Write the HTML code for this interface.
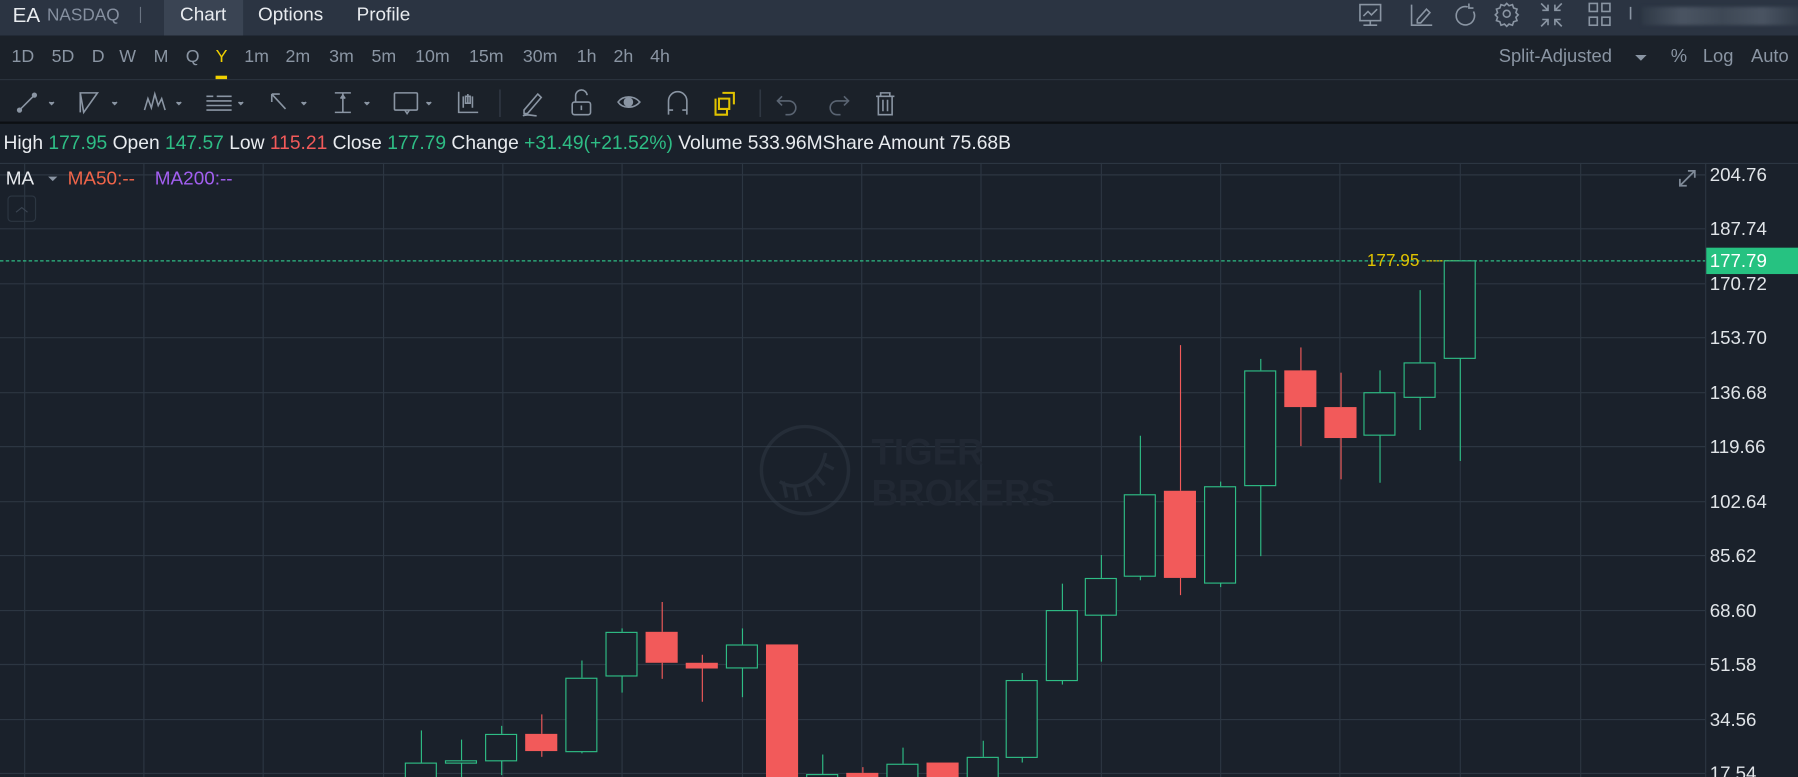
<!DOCTYPE html>
<html><head><meta charset="utf-8"><style>
html,body{margin:0;padding:0;width:1798px;height:777px;overflow:hidden;background:#1a212b;}
#w{position:absolute;left:0;top:0;width:1568px;height:678px;transform:scale(1.14668);transform-origin:0 0;font-family:"Liberation Sans",sans-serif;overflow:hidden;background:#1a212b}
.a{position:absolute;white-space:nowrap}
.hdr{position:absolute;left:0;top:0;width:1568px;height:31px;background:#2b3442}
.r2{position:absolute;left:0;top:31px;width:1568px;height:38px;background:#1b2129;border-bottom:1px solid #2d3540}
.tb{position:absolute;left:0;top:70px;width:1568px;height:36px;background:#1b2129;border-bottom:2px solid #0c0f13}
.tf span{position:absolute;top:41px;font-size:15.5px;color:#8a95a3}
.g{color:#2ebd85}.r{color:#f25a5a}
</style></head><body><div id="w">
<div class="hdr"></div>
<div class="a" style="left:143px;top:0;width:69px;height:31px;background:#3a4453"></div>
<div class="a" style="left:11px;top:3px;font-size:18px;color:#e8ebef">EA</div>
<div class="a" style="left:41px;top:5px;font-size:15px;color:#8690a0">NASDAQ</div>
<div class="a" style="left:122px;top:6px;width:1px;height:14px;background:#6a7482"></div>
<div class="a" style="left:157px;top:4px;font-size:16.5px;color:#e8ebef">Chart</div>
<div class="a" style="left:225px;top:4px;font-size:16.5px;color:#e8ebef">Options</div>
<div class="a" style="left:311px;top:4px;font-size:16.5px;color:#e8ebef">Profile</div>
<svg class="a" style="left:1180px;top:0" width="250" height="28" fill="none" stroke="#8a95a3" stroke-width="1.4">
<rect x="6" y="4" width="18" height="14"/><path d="M9 14l4-4 3 3 5-5M15 18v4M9 22h12"/>
<path d="M51 4v18h18M56 17l8-9 3 3-8 9h-3z"/>
<path d="M100 6a8 8 0 1 0 5 4M101 3v4h4"/>
<circle cx="134" cy="12" r="3"/><path d="M134 3l2 2 3-1 1 3 3 1-1 3 2 2-2 2 1 3-3 1-1 3-3-1-2 2-2-2-3 1-1-3-3-1 1-3-2-2 2-2-1-3 3-1 1-3 3 1z"/>
<path d="M164 3l6 6M170 4v5h-5M182 3l-6 6M176 4v5h5M164 23l6-6M170 22v-5h-5M182 23l-6-6M176 22v-5h5"/>
<rect x="206" y="3" width="7" height="7"/><rect x="217" y="3" width="7" height="7"/><rect x="206" y="15" width="7" height="7"/><rect x="217" y="15" width="7" height="7"/>
<path d="M242 6v11"/></svg>
<div class="a" style="left:1432px;top:6px;width:140px;height:16px;background:linear-gradient(90deg,#2f3946,#4a5462,#3e4855,#4a5462,#2f3946);filter:blur(1.5px)"></div>
<div class="r2"></div>
<div class="tf"><span style="left:10px">1D</span><span style="left:45px">5D</span><span style="left:80px">D</span><span style="left:104px">W</span><span style="left:134px">M</span><span style="left:162px">Q</span><span style="left:188px;color:#f0d000">Y</span><span style="left:213px">1m</span><span style="left:249px">2m</span><span style="left:287px">3m</span><span style="left:324px">5m</span><span style="left:362px">10m</span><span style="left:409px">15m</span><span style="left:456px">30m</span><span style="left:503px">1h</span><span style="left:535px">2h</span><span style="left:567px">4h</span></div>
<div class="a" style="left:188px;top:66px;width:10px;height:3px;background:#f0d000"></div>
<div class="a" style="left:1307px;top:41px;font-size:16px;color:#8a95a3">Split-Adjusted</div>
<div class="a" style="left:1426px;top:48px;width:0;height:0;border-left:5px solid transparent;border-right:5px solid transparent;border-top:5px solid #8a95a3"></div>
<div class="a" style="left:1457px;top:41px;font-size:16px;color:#8a95a3">%</div>
<div class="a" style="left:1485px;top:41px;font-size:16px;color:#8a95a3">Log</div>
<div class="a" style="left:1527px;top:41px;font-size:16px;color:#8a95a3">Auto</div>
<div class="tb"></div>
<svg class="a" style="left:0;top:72px" width="800" height="34" fill="none" stroke="#8a95a3" stroke-width="1.4">
<path d="M17 24l13-13"/><circle cx="17" cy="24" r="1.6" fill="#8a95a3"/><circle cx="30" cy="11" r="1.6" fill="#8a95a3"/><path d="M43 17l2 2 2-2" fill="#8a95a3"/>
<path d="M70 9h15l-12 17zM70 9v17"/><path d="M98 17l2 2 2-2" fill="#8a95a3"/>
<path d="M126 24l3-10 3 8 3-12 3 10 3-6 3 10"/><path d="M154 17l2 2 2-2" fill="#8a95a3"/>
<path d="M180 12h6M180 16h22M180 20h22M180 24h22M189 12h13"/><path d="M208 17l2 2 2-2" fill="#8a95a3"/>
<path d="M237 10l12 13M237 10v7M237 10h7"/><path d="M263 17l2 2 2-2" fill="#8a95a3"/>
<path d="M292 9h14M292 26h14M299 9v17"/><path d="M297 14l2-3 2 3" fill="#8a95a3"/><path d="M318 17l2 2 2-2" fill="#8a95a3"/>
<rect x="344" y="9" width="20" height="15" rx="1"/><path d="M353 24l2 3 2-3"/><path d="M372 17l2 2 2-2" fill="#8a95a3"/>
<path d="M400 8v18h17M404 12v10M408 10v8M412 12v10"/><rect x="406" y="12" width="4" height="6"/>
<path d="M436 6v24" stroke="#2f3742"/>
<path d="M457 24l12-14 3 3-12 14h-3zM456 29c4-2 8 0 12 0"/>
<rect x="499" y="17" width="16" height="11" rx="2"/><path d="M502 17v-5a5 5 0 0 1 10-1M507 20v4"/>
<path d="M539 17c4-6 14-6 19 0c-5 6-15 6-19 0z"/><circle cx="548" cy="17" r="3.5" fill="#8a95a3"/>
<path d="M583 28v-12a8 8 0 0 1 16 0v12M583 24h4M595 24h4"/>
<path d="M627 14h9v9h-9zM630 9h10v10M624 14v14h10v-5" stroke="#e0c200" stroke-width="1.8"/>
<path d="M663 6v24" stroke="#2f3742"/>
<path d="M682 12l-4 4 4 4M678 16h10a6 6 0 0 1 0 12h-3" stroke="#5a6472"/>
<path d="M736 12l4 4-4 4M740 16h-10a6 6 0 0 0 0 12h3" stroke="#5a6472"/>
<path d="M764 12h16M768 12v-3h8v3M766 12v16h12v-16M770 15v10M774 15v10"/>
</svg>
<div class="a" style="left:3px;top:115px;font-size:16.8px;color:#e8ebef">High <span class="g">177.95</span> Open <span class="g">147.57</span> Low <span class="r">115.21</span> Close <span class="g">177.79</span> Change <span class="g">+31.49(+21.52%)</span> Volume 533.96MShare Amount 75.68B</div>
<svg class="a" style="left:0;top:0" width="1568" height="678">
<g stroke="#2c3642" stroke-width="1">
<line x1="0" y1="142.5" x2="1568" y2="142.5"/>
<line x1="1487.5" y1="142" x2="1487.5" y2="678"/>
</g>
<g stroke="#2c3642">
<line x1="0" x2="1487" y1="152.5" y2="152.5"/><line x1="0" x2="1487" y1="199.5" y2="199.5"/><line x1="0" x2="1487" y1="247.5" y2="247.5"/><line x1="0" x2="1487" y1="294.5" y2="294.5"/><line x1="0" x2="1487" y1="342.5" y2="342.5"/><line x1="0" x2="1487" y1="389.5" y2="389.5"/><line x1="0" x2="1487" y1="437.5" y2="437.5"/><line x1="0" x2="1487" y1="484.5" y2="484.5"/><line x1="0" x2="1487" y1="532.5" y2="532.5"/><line x1="0" x2="1487" y1="579.5" y2="579.5"/><line x1="0" x2="1487" y1="627.5" y2="627.5"/><line x1="0" x2="1487" y1="674.5" y2="674.5"/>
<line y1="142" y2="678" x1="21.5" x2="21.5"/><line y1="142" y2="678" x1="125.5" x2="125.5"/><line y1="142" y2="678" x1="229.5" x2="229.5"/><line y1="142" y2="678" x1="334.5" x2="334.5"/><line y1="142" y2="678" x1="438.5" x2="438.5"/><line y1="142" y2="678" x1="542.5" x2="542.5"/><line y1="142" y2="678" x1="647.5" x2="647.5"/><line y1="142" y2="678" x1="751.5" x2="751.5"/><line y1="142" y2="678" x1="855.5" x2="855.5"/><line y1="142" y2="678" x1="960.5" x2="960.5"/><line y1="142" y2="678" x1="1064.5" x2="1064.5"/><line y1="142" y2="678" x1="1168.5" x2="1168.5"/><line y1="142" y2="678" x1="1273.5" x2="1273.5"/><line y1="142" y2="678" x1="1378.5" x2="1378.5"/>
</g>
<g opacity="0.4" fill="none" stroke="#36404c" stroke-width="3">
<circle cx="702" cy="410" r="38"/><path d="M680 420c15 10 35 0 40-25M683 420l3 14M693 424l2 12M703 422l4 11M712 415l7 8M719 405l8 4"/>
</g>
<text x="760" y="405" font-family="Liberation Sans" font-weight="bold" font-size="32" fill="#212833">TIGER</text>
<text x="760" y="441" font-family="Liberation Sans" font-weight="bold" font-size="32" fill="#212833">BROKERS</text>
<line x1="0" x2="1487" y1="227.5" y2="227.5" stroke="#2ebd85" stroke-dasharray="3,2"/>
<text x="1192" y="232" font-family="Liberation Sans" font-size="15" fill="#e0c200">177.95</text>
<line x1="1244" x2="1272" y1="227.5" y2="227.5" stroke="#e0c200" stroke-dasharray="2,1"/>
<g font-family="Liberation Sans" font-size="16.3" fill="#e0e4e8">
<text x="1491" y="158">204.76</text><text x="1491" y="205">187.74</text><text x="1491" y="253">170.72</text><text x="1491" y="300">153.70</text><text x="1491" y="348">136.68</text><text x="1491" y="395">119.66</text><text x="1491" y="443">102.64</text><text x="1491" y="490">85.62</text><text x="1491" y="538">68.60</text><text x="1491" y="585">51.58</text><text x="1491" y="633">34.56</text><text x="1491" y="680">17.54</text>
</g>
<rect x="1488" y="216" width="80" height="23" fill="#26c281"/>
<text x="1491" y="233" font-family="Liberation Sans" font-size="16.3" fill="#ffffff">177.79</text>
<path d="M1465 162l13-13M1472 149h6v6M1465 156v6h6" stroke="#7f8a98" stroke-width="1.5" fill="none"/>
<rect x="7" y="171" width="24" height="22" rx="3" fill="none" stroke="#2c3642"/><path d="M14 185l5-4 5 4" stroke="#3b4552" fill="none"/>
</svg>
<div class="a" style="left:5px;top:147px;font-size:16.5px;color:#e8ebef">MA</div>
<div class="a" style="left:42px;top:154px;width:0;height:0;border-left:4px solid transparent;border-right:4px solid transparent;border-top:4px solid #8a95a3"></div>
<div class="a" style="left:59px;top:147px;font-size:16.5px;color:#f0654a">MA50:--</div>
<div class="a" style="left:135px;top:147px;font-size:16.5px;color:#a25ff0">MA200:--</div>
<svg class="a" style="left:0;top:0" width="1568" height="678" id="cs"></svg>
<script>
var d=[[353,'g',665,700,637,700],[388,'g',663,665,645,690],[423,'g',640,663,633,676],[458,'r',640,655,623,660],[493,'g',591,655,576,657],[528,'g',551,589,548,604],[563,'r',551,578,525,592],[598,'r',578,583,571,612],[633,'g',562,582,548,608],[668,'r',562,700,562,700],[703,'g',675,700,658,700],[738,'r',674,700,669,700],[773,'g',666,700,652,700],[808,'r',665,700,665,700],[843,'g',660,700,646,700],[877,'g',593,660,587,665],[912,'g',532,593,509,597],[946,'g',504,536,484,577],[980,'g',431,502,380,506],[1015,'r',428,504,301,519],[1050,'g',424,508,420,512],[1085,'g',323,423,313,485],[1120,'r',323,355,303,389],[1155,'r',355,382,325,418],[1189,'g',342,379,323,421],[1224,'g',316,346,253,375],[1259,'g',227,312,227,402]];
var s='';d.forEach(function(c){var x=c[0],m=x+14,col=c[1]=='g'?'#2ebd85':'#f25a5a';
s+='<line x1="'+(m+.5)+'" x2="'+(m+.5)+'" y1="'+c[4]+'" y2="'+c[2]+'" stroke="'+col+'"/>';
s+='<line x1="'+(m+.5)+'" x2="'+(m+.5)+'" y1="'+c[3]+'" y2="'+c[5]+'" stroke="'+col+'"/>';
if(c[1]=='g')s+='<rect x="'+(x+.5)+'" y="'+(c[2]+.5)+'" width="27" height="'+Math.max(1,c[3]-c[2])+'" fill="#1a212b" stroke="'+col+'"/>';
else s+='<rect x="'+x+'" y="'+c[2]+'" width="28" height="'+Math.max(2,c[3]-c[2])+'" fill="'+col+'"/>';});
document.getElementById('cs').innerHTML=s;
</script>
</div></body></html>
